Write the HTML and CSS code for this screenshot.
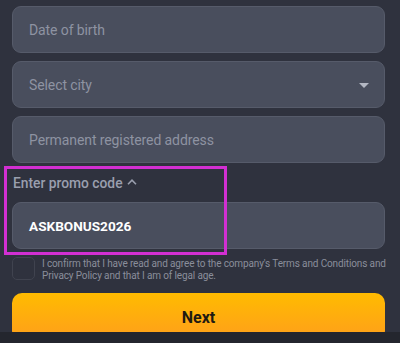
FILE: index.html
```html
<!DOCTYPE html>
<html lang="en">
<head>
<meta charset="utf-8">
<link rel="stylesheet" href="styles.css">
</head>
<body>
<form class="form">
  <div class="field"><span class="placeholder">Date of birth</span></div>
  <div class="field select">
    <span class="placeholder">Select city</span>
    <svg class="tri" width="10" height="5" viewBox="0 0 10 5"><path d="M0 0H10L5 5Z" fill="#b3b7c3"/></svg>
  </div>
  <div class="field"><span class="placeholder">Permanent registered address</span></div>
  <div class="promo-label">Enter promo code
    <svg class="caret" width="10" height="6" viewBox="0 0 10 6"><path d="M1 5.2L5 1.2L9 5.2" fill="none" stroke="#9a9fae" stroke-width="1.6"/></svg>
  </div>
  <div class="field"><span class="value">ASKBONUS2026</span></div>
  <div class="agree">
    <span class="checkbox"></span>
    <p class="agree-text">I confirm that I have read and agree to the company's Terms and Conditions and Privacy Policy and that I am of legal age.</p>
  </div>
  <button type="button" class="next">Next</button>
</form>
<div class="highlight"></div>
<div class="footer"></div>
</body>
</html>
```
FILE: styles.css
```css
html, body {
  margin: 0;
  padding: 0;
  background: #2f323e;
  font-family: Roboto, "Liberation Sans", sans-serif;
  overflow: hidden;
  height: 343px;
}
.form {
  padding: 6px 15px 0 12px;
  display: flex;
  flex-direction: column;
}
.field {
  box-sizing: border-box;
  height: 47px;
  background: #494e5d;
  border: 1px solid #565b6a;
  border-radius: 9px;
  display: flex;
  align-items: center;
  padding: 0 15px 0 16px;
  margin-bottom: 8px;
}
.placeholder {
  color: #8e93a2;
  font-size: 14px;
  letter-spacing: -0.1px;
}
.select {
  justify-content: space-between;
}
.tri {
  display: block;
  margin-top: 1px;
}
.promo-label {
  margin: 2px 0 9px 1px;
  line-height: 20px;
  height: 20px;
  font-size: 13.8px;
  font-weight: 500;
  color: #9a9fae;
  display: flex;
  align-items: center;
  gap: 4px;
}
.caret {
  display: block;
  margin-top: -2px;
}
.value {
  color: #ffffff;
  font-size: 13.6px;
  font-weight: 700;
}
.agree {
  display: flex;
  gap: 7px;
  align-items: flex-start;
  margin-right: -2px;
}
.checkbox {
  box-sizing: border-box;
  flex: none;
  width: 23px;
  height: 23px;
  border: 1px solid #40434f;
  border-radius: 5px;
  background: #2f323e;
}
.agree-text {
  margin: 1px 0 0;
  font-size: 10px;
  line-height: 12px;
  letter-spacing: -0.13px;
  color: #8a8e9b;
}
.next {
  margin-top: 11px;
  height: 48px;
  border: none;
  border-radius: 10px;
  background: linear-gradient(#ffbb00, #ff9e1c);
  color: #1f1a12;
  font-family: Roboto, "Liberation Sans", sans-serif;
  font-size: 16px;
  font-weight: 700;
}
.highlight {
  position: absolute;
  left: 4px;
  top: 166px;
  width: 217px;
  height: 83px;
  border: 3px solid #d22fd2;
}
.footer {
  position: fixed;
  left: 0;
  right: 0;
  bottom: 0;
  height: 11px;
  background: #24262e;
}
```
